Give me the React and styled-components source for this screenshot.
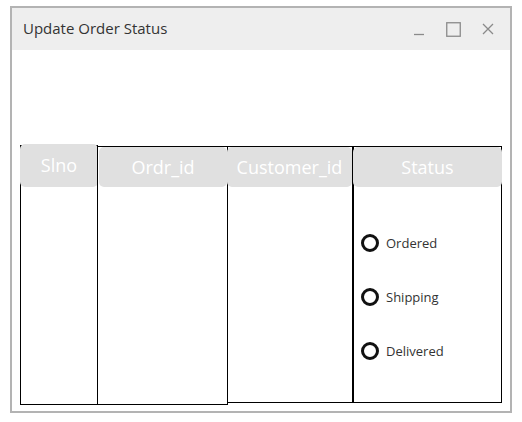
import React from 'react'
import styled, { createGlobalStyle } from 'styled-components'

const Global = createGlobalStyle`
  html, body {
    margin: 0;
    padding: 0;
    background: #ffffff;
    font-family: 'Open Sans', 'Noto Sans', sans-serif;
  }
`

const Page = styled.div`
  padding: 6px 10px 0 10px;
`

const Window = styled.div`
  width: 502px;
  height: 407px;
  box-sizing: border-box;
  border: 2px solid #b3b3b3;
  display: flex;
  flex-direction: column;
  background: #fff;
`

const TitleBar = styled.div`
  height: 42px;
  background: #eeeeee;
  display: flex;
  align-items: center;
  padding: 0 16px 0 11px;
`

const Title = styled.div`
  flex: 1;
  font-size: 15px;
  color: #333;
  padding-bottom: 2px;
`

const Controls = styled.div`
  display: flex;
  align-items: center;
  gap: 21px;
  color: #8a8a8a;
`

const Body = styled.div`
  flex: 1;
  padding: 94px 0 0 8px;
`

const Table = styled.div`
  display: flex;
  align-items: flex-start;
`

const Column = styled.div`
  width: ${p => p.$w}px;
  height: ${p => p.$h}px;
  margin-top: ${p => p.$top || 0}px;
  margin-left: ${p => (p.$first ? 0 : -1)}px;
  box-sizing: border-box;
  border: 1px solid #000;
  border-left-width: ${p => p.$thick ? 2 : 1}px;
  display: flex;
  flex-direction: column;
`

const Header = styled.div`
  height: ${p => p.$h || 40}px;
  margin: ${p => p.$m || '-1px -1px 0 -1px'};
  background: #e0e0e0;
  border-radius: 5px;
  color: #fff;
  font-size: 18px;
  display: flex;
  align-items: center;
  justify-content: center;
  padding-bottom: 1px;
  box-sizing: border-box;
`

const RadioList = styled.div`
  display: flex;
  flex-direction: column;
  gap: 36px;
  padding: 47px 0 0 7px;
`

const Radio = styled.label`
  display: flex;
  align-items: center;
  gap: 7px;
  font-size: 13px;
  color: #333;
  height: 18px;
`

const Circle = styled.span`
  width: 18px;
  height: 18px;
  box-sizing: border-box;
  border: 3px solid #111;
  border-radius: 50%;
`

const App = () => (
  <Page>
    <Global />
    <Window>
      <TitleBar>
        <Title>Update Order Status</Title>
        <Controls>
          <svg width="12" height="16" viewBox="0 0 12 16">
            <path d="M1 13.5h10" stroke="currentColor" strokeWidth="1.3" />
          </svg>
          <svg width="15" height="15" viewBox="0 0 15 15">
            <rect x="0.75" y="0.75" width="13.5" height="13.5" fill="none" stroke="currentColor" strokeWidth="1.3" />
          </svg>
          <svg width="12" height="12" viewBox="0 0 12 12">
            <path d="M1 1l10 10M11 1L1 11" stroke="currentColor" strokeWidth="1.3" />
          </svg>
        </Controls>
      </TitleBar>
      <Body>
        <Table>
          <Column $first $w={78} $h={260} $top={1}>
            <Header $m="-2px -1px 0 -1px" $h={43}>Slno</Header>
          </Column>
          <Column $w={131} $h={259} $top={2}>
            <Header $m="0 0 0 1px">Ordr_id</Header>
          </Column>
          <Column $w={126} $h={257} $top={2}>
            <Header $m="0 0 0 -1px">Customer_id</Header>
          </Column>
          <Column $w={150} $h={257} $top={2} $thick>
            <Header $m="0 -1px 0 -1px">Status</Header>
            <RadioList>
              <Radio><Circle />Ordered</Radio>
              <Radio><Circle />Shipping</Radio>
              <Radio><Circle />Delivered</Radio>
            </RadioList>
          </Column>
        </Table>
      </Body>
    </Window>
  </Page>
)

export default App
